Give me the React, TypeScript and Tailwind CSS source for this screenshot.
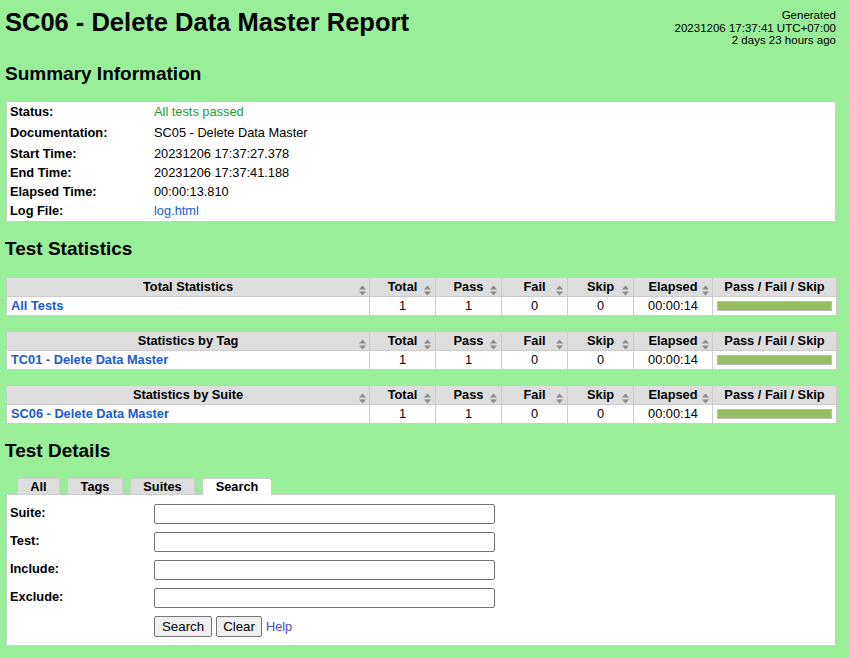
import React from "react";

const SortIcon = () => (
  <svg width="7" height="11" viewBox="0 0 7 11" className="inline-block">
    <polygon points="3.5,0.5 7,4.5 0,4.5" fill="#8c8c8c" />
    <polygon points="0,6.5 7,6.5 3.5,10.5" fill="#8c8c8c" />
  </svg>
);

const cols = ["Total", "Pass", "Fail", "Skip", "Elapsed"];
const colW = ["w-[66px]", "w-[66px]", "w-[66px]", "w-[66px]", "w-[79px]"];

function StatTable({ title, name }: { title: string; name: string }) {
  return (
    <table className="w-[830px] border-collapse table-fixed bg-white">
      <colgroup>
        <col className="w-[363px]" />
        {colW.map((w, i) => (
          <col key={i} className={w} />
        ))}
        <col className="w-[124px]" />
      </colgroup>
      <thead>
        <tr className="bg-[#dddddd] h-[19px]">
          <th className="border border-[#cccccc] font-bold relative px-[4px] text-center">
            {title}
            <span className="absolute right-[3px] top-[4px]">
              <SortIcon />
            </span>
          </th>
          {cols.map((c) => (
            <th
              key={c}
              className="border border-[#cccccc] font-bold relative text-center"
            >
              {c}
              <span
                className={
                  c === "Elapsed"
                    ? "absolute right-[3px] top-[4px]"
                    : "absolute right-[4px] top-[4px]"
                }
              >
                <SortIcon />
              </span>
            </th>
          ))}
          <th className="border border-[#cccccc] font-bold text-center">
            Pass / Fail / Skip
          </th>
        </tr>
      </thead>
      <tbody>
        <tr className="h-[19px]">
          <td className="border border-[#cccccc] px-[4px] font-bold text-[#1a5bcc]">
            {name}
          </td>
          <td className="border border-[#cccccc] text-center">1</td>
          <td className="border border-[#cccccc] text-center">1</td>
          <td className="border border-[#cccccc] text-center">0</td>
          <td className="border border-[#cccccc] text-center">0</td>
          <td className="border border-[#cccccc] text-center">00:00:14</td>
          <td className="border border-[#cccccc] px-[4px]">
            <div className="h-[10px] bg-[#97bd61] border border-[#bbbbbb]" />
          </td>
        </tr>
      </tbody>
    </table>
  );
}

export default function App() {
  const summary: [string, React.ReactNode, string][] = [
    ["Status:", <span className="text-[#1e9a3c]">All tests passed</span>, "h-[20px]"],
    ["Documentation:", "SC05 - Delete Data Master", "h-[22px]"],
    ["Start Time:", "20231206 17:37:27.378", "h-[19px]"],
    ["End Time:", "20231206 17:37:41.188", "h-[19px]"],
    ["Elapsed Time:", "00:00:13.810", "h-[19px]"],
    ["Log File:", <span className="text-[#1a5bcc]">log.html</span>, "h-[20px]"],
  ];
  const searchRows = ["Suite:", "Test:", "Include:", "Exclude:"];
  return (
    <div
      className="bg-[#99ee99] min-h-[658px] w-[850px] text-black text-[12.8px] leading-[15px]"
      style={{ fontFamily: '"Liberation Sans", Arial, sans-serif' }}
    >
      <div className="flex justify-between items-start pl-[5px] pr-[14px]">
        <h1 className="text-[25.5px] font-bold leading-[30px] mt-[7px]">
          SC06 - Delete Data Master Report
        </h1>
        <div className="text-right text-[11.5px] leading-[12.5px] pt-[9px]">
          <div>Generated</div>
          <div>20231206 17:37:41 UTC+07:00</div>
          <div>2 days 23 hours ago</div>
        </div>
      </div>

      <h2 className="pl-[5px] text-[19px] font-bold leading-[22px] mt-[16px]">
        Summary Information
      </h2>
      <div className="ml-[6px] w-[830px] mt-[16px] bg-white border border-[#cccccc] px-[3px]">
        {summary.map(([k, v, h]) => (
          <div key={k} className={`flex items-center ${h}`}>
            <div className="w-[144px] font-bold">{k}</div>
            <div>{v}</div>
          </div>
        ))}
      </div>

      <h2 className="pl-[5px] text-[19px] font-bold leading-[22px] mt-[16px]">
        Test Statistics
      </h2>
      <div className="ml-[6px] mt-[17px] flex flex-col gap-[15px]">
        <StatTable title="Total Statistics" name="All Tests" />
        <StatTable title="Statistics by Tag" name="TC01 - Delete Data Master" />
        <StatTable title="Statistics by Suite" name="SC06 - Delete Data Master" />
      </div>

      <h2 className="pl-[5px] text-[19px] font-bold leading-[22px] mt-[16px]">
        Test Details
      </h2>
      <div className="ml-[6px] w-[830px] mt-[15px]">
        <div className="flex items-end pl-[11px] gap-[7px] h-[17px]">
          {["All", "Tags", "Suites"].map((t, i) => (
            <div
              key={t}
              className={`h-[16px] bg-[#dddddd] border border-[#cccccc] border-b-0 rounded-t-[3px] font-bold flex items-center justify-center ${
                i === 0 ? "w-[43px]" : i === 1 ? "w-[56px]" : "w-[65px]"
              }`}
            >
              {t}
            </div>
          ))}
          <div className="h-[17px] w-[70px] bg-white border border-[#cccccc] border-b-0 rounded-t-[3px] font-bold flex items-center justify-center relative top-[1px] z-10">
            Search
          </div>
        </div>
        <div className="bg-white border border-[#cccccc] px-[3px] pt-[9px] pb-[8px]">
          {searchRows.map((r) => (
            <div key={r} className="flex items-start h-[28px]">
              <div className="w-[144px] font-bold pt-[1px]">{r}</div>
              <div className="w-[341px] h-[20px] border border-[#767676] rounded-[2px] bg-white" />
            </div>
          ))}
          <div className="flex items-center gap-[4px] pl-[144px] h-[21px]">
            <button className="h-[21px] px-[7px] bg-[#efefef] border border-[#767676] rounded-[2px] text-[13.3px]">
              Search
            </button>
            <button className="h-[21px] px-[6px] bg-[#efefef] border border-[#767676] rounded-[2px] text-[13.3px]">
              Clear
            </button>
            <span className="text-[#5a3fd8]">Help</span>
          </div>
        </div>
      </div>
    </div>
  );
}
